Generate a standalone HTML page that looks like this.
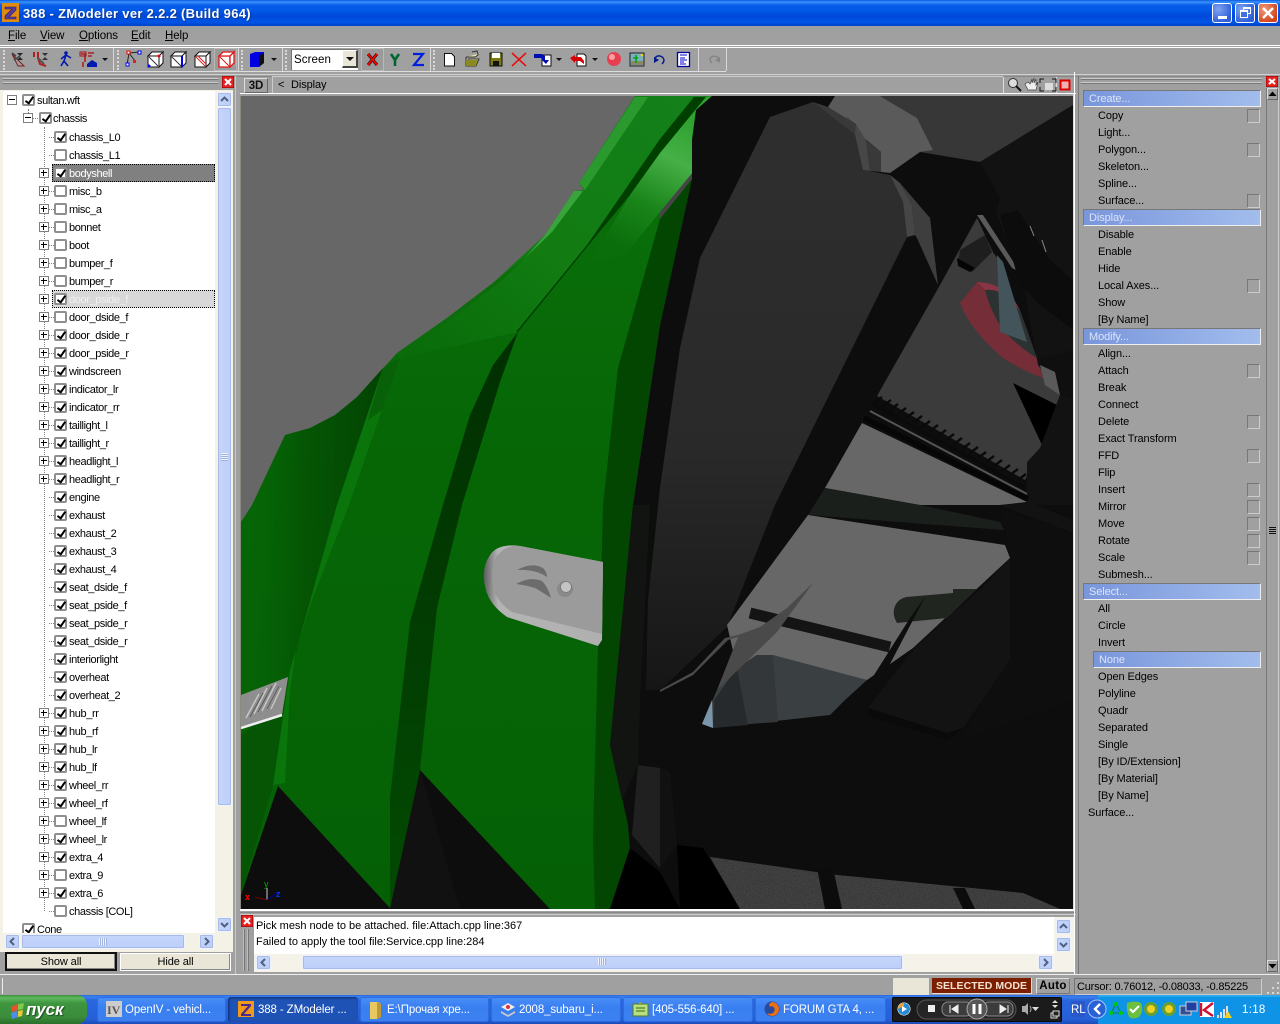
<!DOCTYPE html>
<html><head><meta charset="utf-8"><title>388 - ZModeler</title>
<style>
html,body{margin:0;padding:0;width:1280px;height:1024px;overflow:hidden;background:#a0a0a0}
body{position:relative;font:11px/18px "Liberation Sans",sans-serif;color:#000}
div,span,b,i{position:absolute;display:block;box-sizing:border-box;font-style:normal;white-space:nowrap}
svg{position:absolute;display:block}
#title{left:0;top:0;width:1280px;height:26px;background:linear-gradient(#0a58dc 0,#3a93ff 2px,#0a5fe8 5px,#0058e6 11px,#0047d8 16px,#0055e6 22px,#0044c8 26px)}
#title span{left:23px;top:5px;font:bold 13px/18px "Liberation Sans",sans-serif;color:#fff;letter-spacing:.31px;text-shadow:1px 1px 0 #0b3a9c}
.tb{top:3px;width:20px;height:20px;border:1px solid #fff;border-radius:3px;background:radial-gradient(circle at 30% 30%,#7fa4f0,#2f5fd8 75%)}
.m{top:27px;letter-spacing:-.1px;font-size:11.5px}
.m u{text-decoration:underline}
.hl{background:#fff;height:1px}
.grip{width:3px;border-left:2px dotted #d8d8d8}
.div{width:1px;background:#d8d8d8}
#tree{left:3px;top:91px;width:212px;height:842px;background:#fff;overflow:hidden}
.r{position:relative;height:18px;padding-left:66px;letter-spacing:-.38px;font-size:11px;line-height:21px}
.c{left:51px;top:3px;width:13px;height:12px;border:2px solid #8f8f8f;border-radius:2px;background:#fff}
.k:after{content:"";position:absolute;left:3px;top:-1px;width:3px;height:7px;border:solid #000;border-width:0 2px 2px 0;transform:rotate(35deg)}
.e{left:36px;top:4px;width:10px;height:10px;border:1px solid #7f7f7f;background:#fff}
.e:before{content:"";position:absolute;left:1px;top:3px;width:6px;height:1px;background:#000}
.p:after{content:"";position:absolute;left:3px;top:1px;width:1px;height:6px;background:#000}
.h{left:46px;top:9px;width:5px;border-top:1px dotted #808080}
.sel{left:49px;top:0;width:163px;height:18px;border:1px dotted #000}
.sb{background:linear-gradient(90deg,#c6d6fb,#bccffa);border:1px solid #eef3ff;border-radius:2px;box-shadow:0 0 0 1px #a8bbe6 inset}
.sh{background:linear-gradient(#c6d6fb,#bccffa);border:1px solid #eef3ff;border-radius:2px;box-shadow:0 0 0 1px #a8bbe6 inset}
.btn{background:#e9e6d7;border:1px solid #fff;text-align:center;letter-spacing:-.1px}
.hd{left:1083px;width:178px;height:17px;background:linear-gradient(90deg,#7a96dc,#a2bdec);border:1px solid;border-color:#777 #eee #eee #777;color:#dbe5fa;padding-left:5px;line-height:17px;letter-spacing:-.1px}
.it{left:1098px;letter-spacing:-.1px;line-height:21px;height:17px}
.bx{left:1247px;width:13px;height:14px;border:1px solid;border-color:#777 #ccc #ccc #777}
#task{left:0;top:995px;width:1280px;height:29px;background:linear-gradient(#2a67dd 0,#3b83ee 2px,#2a66df 5px,#2560d8 24px,#1c4bb8 29px)}
.t{top:2px;height:25px;background:linear-gradient(#4a90f8,#3a7ff0 40%,#3c80ef);border-radius:3px;color:#fff;padding-left:28px;line-height:26px;font-size:11.5px;letter-spacing:-.12px;box-shadow:inset 0 0 0 1px #2d6ce0}
.t.a{background:#1f52b5;box-shadow:inset 1px 1px 2px #0f306f}
</style></head><body>

<!-- title bar -->
<div id="title">
<span>388 - ZModeler ver 2.2.2 (Build 964)</span>
<svg style="left:2px;top:3px" width="17" height="19" viewBox="0 0 17 19"><rect width="17" height="19" fill="#e08a10"/><path d="M3 4H14V7L7 14H14V16H3V13L10 6H3Z" fill="#5a3aa0" stroke="#2a2050" stroke-width=".6"/></svg>
<div class="tb" style="left:1212px"><i style="left:5px;top:12px;width:9px;height:3px;background:#fff"></i></div>
<div class="tb" style="left:1235px"><i style="left:7px;top:3px;width:8px;height:7px;border:1px solid #fff;border-top-width:2px"></i><i style="left:4px;top:6px;width:8px;height:8px;border:1px solid #fff;border-top-width:2px;background:#3f6ede"></i></div>
<div class="tb" style="left:1258px;background:radial-gradient(circle at 30% 30%,#ef9a7a,#d4441c 75%)"><svg width="18" height="18"><path d="M4 4L14 14M14 4L4 14" stroke="#fff" stroke-width="2.4"/></svg></div>
</div>

<!-- menu -->
<span class="m" style="left:8px"><u>F</u>ile</span>
<span class="m" style="left:40px"><u>V</u>iew</span>
<span class="m" style="left:79px"><u>O</u>ptions</span>
<span class="m" style="left:131px"><u>E</u>dit</span>
<span class="m" style="left:165px"><u>H</u>elp</span>
<div class="hl" style="left:0;top:45px;width:1280px"></div>
<div class="hl" style="left:0;top:47px;width:1280px"></div>

<!-- toolbar -->
<div class="hl" style="left:0;top:71px;width:726px;background:#ddd"></div>
<div style="left:0;top:74px;width:1280px;height:1px;background:#d0d0d0"></div>
<div style="left:0;top:76px;width:1280px;height:1px;background:#888"></div>
<div class="grip" style="left:3px;top:50px;height:20px"></div>
<div class="div" style="left:113px;top:48px;height:23px"></div>
<div class="grip" style="left:117px;top:50px;height:20px"></div>
<div class="div" style="left:238px;top:48px;height:23px"></div>
<div class="grip" style="left:241px;top:50px;height:20px"></div>
<div class="div" style="left:282px;top:48px;height:23px"></div>
<div class="grip" style="left:285px;top:50px;height:20px"></div>
<div class="div" style="left:430px;top:48px;height:23px"></div>
<div class="grip" style="left:433px;top:50px;height:20px"></div>
<div class="div" style="left:698px;top:48px;height:23px"></div>
<div class="div" style="left:726px;top:48px;height:23px"></div>
<div style="left:214px;top:48px;width:23px;height:23px;background:#9a9a9a;border:1px solid #b8b8b8"></div>
<div style="left:361px;top:48px;width:23px;height:23px;background:#9a9a9a;border:1px solid #b8b8b8"></div>
<div style="left:291px;top:49px;width:67px;height:21px;background:#fff;border:1px solid #777;border-width:1px 0 0 1px;padding-left:2px;line-height:21px;font-size:11.5px;letter-spacing:.1px">Screen</div>
<div style="left:342px;top:50px;width:16px;height:18px;background:#e9e6d7;border:1px solid #555;border-width:1px 2px 2px 1px;border-color:#fff #444 #444 #fff"></div>

<svg style="left:0;top:48px" width="730" height="24" viewBox="0 48 730 24" fill="none">
<path d="M12 54L18 66L24 66Z" stroke="#7a2020"/><path d="M12 53l4 3M14 60l6-4" stroke="#444" stroke-width="1.5"/><path d="M17 53h6l-3 3zM17 60h6l-3-3z" fill="#223"/>
<path d="M34 52v5M38 52v6l2 6 6 2" stroke="#b02020" stroke-width="2"/><path d="M38 58l6 6" stroke="#555" stroke-width="2"/><path d="M42 53h6l-3 3zM42 60h6l-3-3z" fill="#333"/>
<circle cx="66" cy="53" r="1.8" fill="#0018b0"/><path d="M66 55l-2 6-3 5M64 61l4 5M66 55l-5 4M66 55l5 3" stroke="#0018b0" stroke-width="1.6"/>
<path d="M81 54h4v8M83 62v5M88 53h6M88 56h4" stroke="#b02020" stroke-width="1.6"/><path d="M87 64l5-4 5 3v4H87Z" fill="#001ab0"/><path d="M80 52h6v4h-6z" stroke="#a01818"/>
<path d="M102 58h6l-3 3z" fill="#111"/>
<path d="M127 65L129 53L140 52M129 53L135 61" stroke="#222" stroke-width="1"/><rect x="126" y="63" width="3" height="3" fill="#fff" stroke="#00f"/><rect x="127" y="51" width="3" height="3" fill="#fff" stroke="#e00"/><rect x="138" y="51" width="3" height="3" fill="#fff" stroke="#00f"/><rect x="133" y="60" width="3" height="3" fill="#e02020"/>
<g fill="#fff" stroke="#111"><path d="M148 56h11v11h-11z"/><path d="M148 56l4-4h11l-4 4zM159 56l4-4v11l-4 4z"/></g><path d="M149 57l9 9" stroke="#333"/><circle cx="159" cy="56" r="1.5" fill="#e00"/><circle cx="149" cy="66" r="1.5" fill="#00e"/>
<g fill="#fff" stroke="#111"><path d="M171 56h11v11h-11z"/><path d="M171 56l4-4h11l-4 4zM182 56l4-4v11l-4 4z"/></g><path d="M182 56v11" stroke="#00e" stroke-width="2"/><path d="M172 57l9 9" stroke="#333"/>
<g fill="#fff" stroke="#111"><path d="M195 56h11v11h-11z"/><path d="M195 56l4-4h11l-4 4zM206 56l4-4v11l-4 4z"/></g><path d="M196 57l9 9M198 56l8 8" stroke="#e02020"/>
<g fill="#fff" stroke="#e01818" stroke-width="1.3"><path d="M219 56h11v11h-11z"/><path d="M219 56l4-4h11l-4 4zM230 56l4-4v11l-4 4z"/></g><path d="M220 57l9 9" stroke="#e01818"/>
<path d="M250 54l5-2h9v11l-5 4h-9z" fill="#0000e0"/><path d="M259 56l5-3v10l-5 4z" fill="#111"/><path d="M271 58h6l-3 3z" fill="#111"/>
<path d="M346 57h8l-4 4z" fill="#111"/>
<path d="M368 54l9 11M377 54l-9 11" stroke="#111" stroke-width="3"/><path d="M368 54l9 11M377 54l-9 11" stroke="#f00" stroke-width="1.8"/>
<path d="M391 54l4 6 4-6M395 60v6" stroke="#063" stroke-width="2.6"/>
<path d="M413 54h10l-9 11h10" stroke="#0020e0" stroke-width="2.2"/>
<path d="M444.500 53.500h7l3 3v9.500h-10z" fill="#fff" stroke="#111"/>
<path d="M466 57h9l3-2v-1M466 57v9h10l3-7h-10l-3 7" fill="#f0e8a0" stroke="#333"/><path d="M466 60v6h10l2-6z" fill="#8a8a20"/><path d="M472 52l5-1 1 3" stroke="#333"/>
<rect x="490" y="53" width="12" height="13" fill="#7a7a10" stroke="#111"/><rect x="492" y="53" width="8" height="5" fill="#fff"/><rect x="493" y="61" width="6" height="5" fill="#111"/>
<path d="M512 53l14 13M526 53l-14 13" stroke="#e81010" stroke-width="1.6"/>
<path d="M542 55h9v11h-9z" fill="#fff" stroke="#111"/><path d="M534 54h8l3 2v4h4l-3 4-4-4v-2h-8z" fill="#0010b0"/><path d="M556 58h6l-3 3z" fill="#111"/>
<path d="M577 54h7l2 2v10h-9z" fill="#fff" stroke="#111"/><path d="M570 58l5-3v2h6l3 4v3l-4-3h-5v2z" fill="#d80000"/><path d="M592 58h6l-3 3z" fill="#111"/>
<circle cx="614" cy="59" r="7" fill="#e64050"/><circle cx="612" cy="57" r="3" fill="#f8a0a0"/>
<rect x="630" y="53" width="14" height="13" fill="#7ab0c0" stroke="#222"/><rect x="631" y="61" width="12" height="4" fill="#886"/><path d="M636 55v8M633 58h5" stroke="#0a0" stroke-width="1.600"/><circle cx="642" cy="55" r="1.300" fill="#fc0"/>
<path d="M655 58a5 5 0 0 1 9 2c0 2-1 3-2 4" stroke="#001a90" stroke-width="1.400"/><path d="M654 63v-6l5 3z" fill="#001a90"/>
<rect x="677.500" y="52.500" width="12" height="14" fill="#fff" stroke="#0000a0" stroke-width="1.300"/><path d="M680 55h7M680 58h5M680 60h7M680 62h4M680 64h6" stroke="#0000d0"/>
<path d="M719 59a5 5 0 0 0-9 0c0 2 1 3 2 4" stroke="#858585" stroke-width="1.400"/><path d="M720 63v-6l-5 3z" fill="#858585"/>
</svg>

<!-- left panel -->
<div style="left:3px;top:78px;width:215px;height:2px;border-top:1px solid #ccc;border-bottom:1px solid #777"></div>
<div style="left:3px;top:82px;width:215px;height:2px;border-top:1px solid #ccc;border-bottom:1px solid #777"></div>
<svg style="left:222px;top:76px" width="12" height="12"><rect width="12" height="12" fill="#e82020" stroke="#800"/><path d="M3 3l6 6M9 3l-6 6" stroke="#fff" stroke-width="2"/></svg>
<div style="left:0;top:90px;width:233px;height:862px;background:#f4f2e6"></div>

<div id="tree">
<div style="left:25px;top:18px;height:6px;border-left:1px dotted #808080"></div>
<div style="left:41px;top:36px;height:784px;border-left:1px dotted #808080"></div>
<div class="r" style="padding-left:34px"><b class="e" style="left:4px"></b><b class="c k" style="left:19px"></b>sultan.wft</div>
<div class="r" style="padding-left:50px"><b class="e" style="left:20px"></b><b class="h" style="left:30px"></b><b class="c k" style="left:36px"></b>chassis</div>
<div class="r" style="top:1px"><b class="h"></b><b class="c k"></b>chassis_L0</div>
<div class="r" style="top:1px"><b class="h"></b><b class="c"></b>chassis_L1</div>
<div class="r" style="top:1px"><b class="sel" style="background:#808080"></b><b class="e p"></b><b class="c k"></b><span style="left:66px;color:#fff">bodyshell</span></div>
<div class="r" style="top:1px"><b class="e p"></b><b class="h"></b><b class="c"></b>misc_b</div>
<div class="r" style="top:1px"><b class="e p"></b><b class="h"></b><b class="c"></b>misc_a</div>
<div class="r" style="top:1px"><b class="e p"></b><b class="h"></b><b class="c"></b>bonnet</div>
<div class="r" style="top:1px"><b class="e p"></b><b class="h"></b><b class="c"></b>boot</div>
<div class="r" style="top:1px"><b class="e p"></b><b class="h"></b><b class="c"></b>bumper_f</div>
<div class="r" style="top:1px"><b class="e p"></b><b class="h"></b><b class="c"></b>bumper_r</div>
<div class="r" style="top:1px"><b class="sel" style="background:#d8d8d8"></b><b class="e p"></b><b class="c k"></b><span style="left:66px;color:#f0f0f0">door_pside_f</span></div>
<div class="r" style="top:1px"><b class="e p"></b><b class="h"></b><b class="c"></b>door_dside_f</div>
<div class="r" style="top:1px"><b class="e p"></b><b class="h"></b><b class="c k"></b>door_dside_r</div>
<div class="r" style="top:1px"><b class="e p"></b><b class="h"></b><b class="c k"></b>door_pside_r</div>
<div class="r" style="top:1px"><b class="e p"></b><b class="h"></b><b class="c k"></b>windscreen</div>
<div class="r" style="top:1px"><b class="e p"></b><b class="h"></b><b class="c k"></b>indicator_lr</div>
<div class="r" style="top:1px"><b class="e p"></b><b class="h"></b><b class="c k"></b>indicator_rr</div>
<div class="r" style="top:1px"><b class="e p"></b><b class="h"></b><b class="c k"></b>taillight_l</div>
<div class="r" style="top:1px"><b class="e p"></b><b class="h"></b><b class="c k"></b>taillight_r</div>
<div class="r" style="top:1px"><b class="e p"></b><b class="h"></b><b class="c k"></b>headlight_l</div>
<div class="r" style="top:1px"><b class="e p"></b><b class="h"></b><b class="c k"></b>headlight_r</div>
<div class="r" style="top:1px"><b class="h"></b><b class="c k"></b>engine</div>
<div class="r" style="top:1px"><b class="h"></b><b class="c k"></b>exhaust</div>
<div class="r" style="top:1px"><b class="h"></b><b class="c k"></b>exhaust_2</div>
<div class="r" style="top:1px"><b class="h"></b><b class="c k"></b>exhaust_3</div>
<div class="r" style="top:1px"><b class="h"></b><b class="c k"></b>exhaust_4</div>
<div class="r" style="top:1px"><b class="h"></b><b class="c k"></b>seat_dside_f</div>
<div class="r" style="top:1px"><b class="h"></b><b class="c k"></b>seat_pside_f</div>
<div class="r" style="top:1px"><b class="h"></b><b class="c k"></b>seat_pside_r</div>
<div class="r" style="top:1px"><b class="h"></b><b class="c k"></b>seat_dside_r</div>
<div class="r" style="top:1px"><b class="h"></b><b class="c k"></b>interiorlight</div>
<div class="r" style="top:1px"><b class="h"></b><b class="c k"></b>overheat</div>
<div class="r" style="top:1px"><b class="h"></b><b class="c k"></b>overheat_2</div>
<div class="r" style="top:1px"><b class="e p"></b><b class="h"></b><b class="c k"></b>hub_rr</div>
<div class="r" style="top:1px"><b class="e p"></b><b class="h"></b><b class="c k"></b>hub_rf</div>
<div class="r" style="top:1px"><b class="e p"></b><b class="h"></b><b class="c k"></b>hub_lr</div>
<div class="r" style="top:1px"><b class="e p"></b><b class="h"></b><b class="c k"></b>hub_lf</div>
<div class="r" style="top:1px"><b class="e p"></b><b class="h"></b><b class="c k"></b>wheel_rr</div>
<div class="r" style="top:1px"><b class="e p"></b><b class="h"></b><b class="c k"></b>wheel_rf</div>
<div class="r" style="top:1px"><b class="e p"></b><b class="h"></b><b class="c"></b>wheel_lf</div>
<div class="r" style="top:1px"><b class="e p"></b><b class="h"></b><b class="c k"></b>wheel_lr</div>
<div class="r" style="top:1px"><b class="e p"></b><b class="h"></b><b class="c k"></b>extra_4</div>
<div class="r" style="top:1px"><b class="e p"></b><b class="h"></b><b class="c"></b>extra_9</div>
<div class="r" style="top:1px"><b class="e p"></b><b class="h"></b><b class="c k"></b>extra_6</div>
<div class="r" style="top:1px"><b class="h"></b><b class="c"></b>chassis [COL]</div>
<div class="r" style="top:1px;padding-left:34px"><b class="c k" style="left:19px"></b>Cone</div>
</div>

<!-- tree scrollbars -->
<div class="sb" style="left:217px;top:92px;width:15px;height:15px"></div>
<svg style="left:217px;top:92px" width="15" height="15"><path d="M4 9l3.500-3.500L11 9" fill="none" stroke="#4d6185" stroke-width="2"/></svg>
<div class="sb" style="left:217px;top:107px;width:15px;height:699px"></div>
<div style="left:221px;top:453px;width:7px;height:8px;background:repeating-linear-gradient(#eef3ff 0 1px,#9fb3dd 1px 2px)"></div>
<div class="sb" style="left:217px;top:917px;width:15px;height:15px"></div>
<svg style="left:217px;top:917px" width="15" height="15"><path d="M4 6l3.500 3.500L11 6" fill="none" stroke="#4d6185" stroke-width="2"/></svg>
<div class="sh" style="left:5px;top:934px;width:15px;height:15px"></div>
<svg style="left:5px;top:934px" width="15" height="15"><path d="M9 4L5.500 7.500L9 11" fill="none" stroke="#4d6185" stroke-width="2"/></svg>
<div class="sh" style="left:21px;top:934px;width:164px;height:15px"></div>
<div style="left:99px;top:938px;width:8px;height:7px;background:repeating-linear-gradient(90deg,#eef3ff 0 1px,#9fb3dd 1px 2px)"></div>
<div class="sh" style="left:199px;top:934px;width:15px;height:15px"></div>
<svg style="left:199px;top:934px" width="15" height="15"><path d="M6 4l3.500 3.500L6 11" fill="none" stroke="#4d6185" stroke-width="2"/></svg>
<div class="btn" style="left:5px;top:952px;width:112px;height:19px;border:2px solid #111;line-height:16px;box-shadow:inset -1px -1px 0 #888">Show all</div>
<div class="btn" style="left:120px;top:953px;width:111px;height:18px;line-height:16px;box-shadow:inset -1px -1px 0 #888">Hide all</div>
<div style="left:0;top:974px;width:1280px;height:1px;background:#eee"></div>
<div style="left:235px;top:76px;width:1px;height:898px;background:#c8c8c8"></div>

<!-- viewport header -->
<div class="btn" style="left:244px;top:78px;width:24px;height:15px;background:#a0a0a0;border-color:#ddd #666 #666 #ddd;font-weight:bold;line-height:14px;color:#111;font-size:11.500px">3D</div>
<div style="left:272px;top:76px;width:1px;height:17px;background:#ccc"></div>
<span style="left:278px;top:76px">&lt;</span><span style="left:291px;top:76px;letter-spacing:-.1px">Display</span>
<div style="left:272px;top:76px;width:731px;height:1px;background:#ccc"></div>
<div style="left:1003px;top:77px;width:1px;height:16px;background:#ddd"></div>
<div style="left:1056px;top:77px;width:1px;height:16px;background:#ddd"></div>
<svg style="left:1006px;top:76px" width="66" height="18">
<circle cx="7" cy="7" r="4.500" fill="#ddd" stroke="#333"/><path d="M10 10l5 5" stroke="#111" stroke-width="2"/>
<path d="M19 8l3 6h8l2-8-2 3V3l-2 4V2l-2 5V3l-2 5-2-2z" fill="#eee" stroke="#444" stroke-width=".7"/>
<path d="M34 7V3h4M46 3h4v4M34 11v4h4M50 11v4h-4" stroke="#111" fill="none"/><rect x="39" y="7" width="8" height="7" fill="#ddd"/>
<rect x="54.500" y="4.500" width="9" height="9" fill="#f0b0b0" stroke="#d00" stroke-width="2"/></svg>
<div style="left:240px;top:93px;width:836px;height:1px;background:#fff"></div>

<!-- 3D viewport -->
<svg style="left:241px;top:96px" width="832" height="813" viewBox="241 96 832 813">
<defs>
<linearGradient id="gm" x1="0" y1="0" x2="0" y2="1"><stop offset="0" stop-color="#0b720b"/><stop offset=".4" stop-color="#066706"/><stop offset="1" stop-color="#056005"/></linearGradient>
<linearGradient id="gb" x1="1" y1="0" x2="0" y2="1"><stop offset="0" stop-color="#13801a"/><stop offset=".55" stop-color="#127c12"/><stop offset="1" stop-color="#086b08"/></linearGradient>
<linearGradient id="gd" x1="0" y1="0" x2="1" y2="0"><stop offset="0" stop-color="#066406" stop-opacity="0"/><stop offset=".45" stop-color="#034a03" stop-opacity=".6"/><stop offset="1" stop-color="#023e02" stop-opacity=".9"/></linearGradient>
<linearGradient id="gw" gradientUnits="userSpaceOnUse" x1="690" y1="120" x2="625" y2="250"><stop offset="0" stop-color="#2fa22f"/><stop offset=".3" stop-color="#46b046"/><stop offset=".65" stop-color="#1a851a"/><stop offset="1" stop-color="#0a6e0a"/></linearGradient>
<linearGradient id="gs" x1="0" y1="0" x2="0" y2="1"><stop offset="0" stop-color="#2f2f2f"/><stop offset=".6" stop-color="#292929"/><stop offset="1" stop-color="#161616"/></linearGradient>
<linearGradient id="gu" x1="0" y1="0" x2="0" y2="1"><stop offset="0" stop-color="#012f01"/><stop offset="1" stop-color="#024a02"/></linearGradient>
<linearGradient id="gp" x1="0" y1="0" x2="1" y2="0"><stop offset="0" stop-color="#5c5c5c"/><stop offset=".12" stop-color="#b4b4b4"/><stop offset="1" stop-color="#b0b0b0"/></linearGradient>
<filter id="n" x="0" y="0" width="100%" height="100%"><feTurbulence type="fractalNoise" baseFrequency=".7" numOctaves="2" seed="4"/><feColorMatrix values="0 0 0 0 .04 0 0 0 0 .04 0 0 0 0 .04 3.200 0 0 0 -1.100"/><feComposite in2="SourceGraphic" operator="in"/></filter>
</defs>
<rect x="241" y="96" width="832" height="813" fill="#676767"/>
<polygon points="241,850 278,770 420,750 640,830 640,909 241,909" fill="#0d0d0d"/>
<polygon points="420,770 390,908 460,909 420,770" fill="#111"/>
<!-- green main -->
<polygon points="635,96 712,96 695,110 693,178 660,325 633,505 610,745 628,825 630,848 610,909 550,909 420,770 390,908 278,786 241,895 241,522 252,505 285,435 310,428 335,415 357,397 397,353 447,318 493,283 545,235 574,191 584,190 579,183" fill="url(#gm)"/>
<polygon points="241,522 252,505 285,435 310,428 335,415 357,397 383,368 337,505 307,612 290,678 273,785 241,895" fill="url(#gd)"/>
<polygon points="241,895 273,785 288,700 241,735" fill="#055505"/>
<polygon points="383,368 400,358 349,505 312,600 296,650 290,690 285,783 273,785 290,670 307,612 337,505" fill="#0a750a"/>
<polygon points="383,368 400,358 382,410 368,420" fill="#086008"/>
<polygon points="635,96 712,96 660,145 587,247 518,332 400,358 397,353 447,318 493,283 545,235 574,191 584,190 579,183" fill="url(#gb)"/>
<polygon points="635,97 648,97 585,190 579,183" fill="#2a9a2e"/>
<polygon points="574,191 583,191 552,232 525,258 545,235" fill="#3aa43c"/>
<polygon points="525,258 552,232 500,282 447,322 400,358 397,353 447,318 493,283" fill="#0c6c0c"/>
<polygon points="694,97 706,97 660,153 630,195 587,247 518,332 516,332 587,245 660,139" fill="#013f01"/>
<polygon points="706,97 712,96 696,110 692,140 692,175 660,212 625,255 590,262 630,195 660,153" fill="url(#gw)"/>
<polygon points="693,172 692,179 660,219 660,212" fill="#454545"/>
<polygon points="518,332 493,365 470,415 443,505 410,622 390,798 390,908 420,770 437,608 462,505 500,382" fill="url(#gu)"/>
<polygon points="692,179 660,219 618,368 603,505 602,548 598,645 593,838 595,909 610,909 630,848 628,825 610,745 633,505 660,325" fill="#024602"/>

<!-- bracket -->
<path d="M603,562 L520,546 Q498,543 490,555 Q480,570 486,590 Q490,605 507,617 L598,646 L602,640 Z" fill="url(#gp)"/>
<path d="M603,562 L520,546 Q505,545 496,557 Q490,570 493,588 Q498,603 512,612 L602,634 Z" fill="#9b9b9b"/>
<path d="M517 570q15-8 26-2q4 4 4 9q-12-8-30-7zM516 584q14-8 26-3q6 6 9 17q-12-8-16-10q-10-3-19-4z" fill="#6c6c6c"/>
<circle cx="565" cy="589" r="8" fill="#8a8a8a"/><circle cx="566" cy="587" r="5.500" fill="#c4c4c4" stroke="#777" stroke-width=".8"/>
<!-- tail light -->
<polygon points="241,695 288,677 282,715 241,729" fill="#8e8e8e"/>
<path d="M246 718l13-24M254 714l13-26M262 711l14-28M271 709l10-21" stroke="#c8c8c8" stroke-width="1.400"/><path d="M250 717l13-24M258 712l14-26M267 709l12-23" stroke="#555" stroke-width=".8"/>
<path d="M241 728l41-13" stroke="#eee" stroke-width="2.500"/>

<!-- dark base -->
<polygon points="712,96 1073,96 1073,909 610,909 630,848 628,825 610,745 633,505 660,325 692,179 692,140 696,110" fill="#0d0d0d"/>
<polygon points="633,505 650,505 640,700 638,765 622,800 610,745" fill="#121412"/>
<polygon points="638,765 660,768 660,868 632,835" fill="#202020"/>
<polygon points="660,768 670,772 677,845 660,868" fill="#111"/>
<polygon points="630,848 660,872 680,909 610,909" fill="#000"/>
<polygon points="677,845 703,848 740,909 680,909" fill="#000"/>
<!-- cylinder & top right -->
<polygon points="880,96 1073,96 1073,105 980,162 920,152 933,150 917,118" fill="#373737"/>
<polygon points="835,96 880,96 917,118 933,150 920,152 890,173 881,172 881,152 846,123 828,107" fill="#5a5a5a"/>
<!-- seat -->
<polygon points="813,102 770,117 700,258 680,348 660,488 648,600 646,690 660,690 727,627 775,505 907,237 903,202 890,175 863,170 855,135" fill="url(#gs)"/>
<polygon points="846,116 855,135 863,170 870,171 866,140 856,124" fill="#474747"/>
<polygon points="866,140 881,152 881,172 870,171" fill="#393939"/>
<polygon points="813,102 828,107 856,124 855,135" fill="#393939"/>
<polygon points="890,175 900,183 912,205 915,235 907,237 903,202" fill="#464646"/>
<polygon points="900,183 930,218 938,285 917,238 915,235 912,205" fill="#3e3e3e"/>
<!-- centre gray -->
<polygon points="940,285 977,218 993,252 1000,262 1038,362 1060,395 1042,445 1025,480 877,396" fill="#3b3b3b"/>
<polygon points="1013,383 1057,405 1042,445" fill="#000"/>
<polygon points="977,215 983,215 1020,272 1012,268" fill="#5a5a5a"/>
<polygon points="960,250 985,235 992,252 972,272 958,262" fill="#1e1e1e"/>
<polygon points="957,258 975,268 970,272 958,266" fill="#050505"/>
<!-- red ring -->
<path d="M960,303 Q970,330 1003,358 Q1025,372 1043,378 L1037,358 Q1020,348 1003,330 Q990,310 985,290 L977,282 Z" fill="#752d37"/>
<path d="M977,282 Q1000,283 1013,298 L1020,310 L1008,304 Q995,290 985,290Z" fill="#8a3545"/>
<path d="M985,290 Q1000,288 1012,302 L1020,310 L1037,358 Q1020,348 1003,330 Q990,310 985,290Z" fill="#2c3232"/>
<polygon points="997,255 1003,262 1027,342 1000,332" fill="#43555a"/>
<!-- right dark -->
<polygon points="1073,105 980,162 1000,198 996,212 1023,282 1038,365 1060,395 1040,448 1027,462 1027,505 1073,505" fill="#121212"/>
<polygon points="1000,215 1018,210 1050,260 1073,280 1073,330 1040,305 1020,285" fill="#0c0c0c"/>
<path d="M1030 226l4 10M1042 240l4 12" stroke="#888" stroke-width="1"/>
<polygon points="1037,358 1055,355 1073,350 1073,400 1060,395" fill="#0f0f0f"/>
<polygon points="1040,365 1055,372 1060,395 1045,385" fill="#5a5a5a"/>
<!-- comb -->
<path d="M875 402l7-5M883 406l8-6M890 410l8-6M898 414l8-6M906 418l8-6M914 422l8-6M922 427l8-6M930 431l8-6M938 436l8-6M946 440l8-6M954 444l8-6M962 449l8-6M970 453l8-6M978 458l8-6M986 462l8-6M994 466l8-6M1002 471l8-6M1010 475l8-6M1018 480l8-6" stroke="#0a0a0a" stroke-width="2.400"/>
<path d="M873 404L1025 488" stroke="#0a0a0a" stroke-width="3"/>
<path d="M870 411L1027 494" stroke="#555" stroke-width="2"/>
<polygon points="862,423 1027,502 1000,505 920,505 825,488" fill="#676767"/>
<path d="M864 418L1028 499" stroke="#060606" stroke-width="5"/>
<polygon points="825,488 920,505 1000,522 1004,530 808,515" fill="#1a1f1c"/>
<polygon points="1000,508 1070,533 1073,560 1040,580 1010,558 1005,530" fill="#0e0e0e"/>
<polygon points="1000,505 1030,503 1073,520 1073,533" fill="#121212"/>
<!-- grey B -->
<polygon points="808,515 1005,545 1010,558 913,648 867,680 757,655 737,668 727,625" fill="#676767"/>
<path d="M750 613L890 647" stroke="#141414" stroke-width="11"/>
<!-- window -->
<polygon points="713,728 702,724 717,690 737,668 757,655 773,655 867,680 845,700 830,715" fill="#3a3f42"/>
<polygon points="737,668 757,655 773,655 778,722 748,724" fill="#343739"/>
<polygon points="712,700 702,724 713,728" fill="#7a95a8"/>
<polygon points="713,728 714,700 737,668 748,725" fill="#262a2c"/>
<!-- blade -->
<polygon points="660,690 693,672 725,638 738,635 760,627 787,608 813,583 777,632 740,668 717,690 738,637 728,640 693,675 660,692" fill="#4a4a4a"/>
<!-- right seat -->
<polygon points="1010,558 980,590 947,618 913,650 868,708 947,733 963,728 1010,660 1050,570" fill="#121312"/>
<polygon points="1010,558 1050,570 1073,540 1073,700 960,740 1010,660" fill="#0e0e0e"/>
<path d="M897 623q-6-10-1-19q3-5 10-7L953 593l0-4h24L947 618z" fill="#20261f"/>
<polygon points="925,597 867,708 857,702 910,618" fill="#0c0d0c"/>
<polygon points="868,708 947,733 963,728 947,740 868,716" fill="#0a0a0a"/>
<!-- carpet -->
<polygon points="710,857 837,875 1023,893 1060,909 740,909" fill="#434343"/>
<polygon points="710,857 837,875 1023,893 1060,909 740,909" fill="#fff" filter="url(#n)"/>
<polygon points="817,868 833,868 842,909 825,909" fill="#0c0c0c"/>
<polygon points="953,888 965,888 975,909 963,909" fill="#0c0c0c"/>
<!-- axes -->
<path d="M267 900V888" stroke="#ccc"/><path d="M267 900L255 897" stroke="#700"/><path d="M267 900L277 893" stroke="#00a"/>
<text x="245" y="900" font-family="Liberation Sans" font-weight="bold" font-size="9" fill="#f00">x</text>
<text x="264" y="887" font-family="Liberation Sans" font-size="9" fill="#0a0">y</text>
<text x="276" y="897" font-family="Liberation Sans" font-weight="bold" font-size="9" fill="#03f">z</text>
</svg>
<div style="left:240px;top:96px;width:1px;height:813px;background:#8a8a80"></div>
<div style="left:1073px;top:94px;width:1px;height:816px;background:#ddd"></div>
<div style="left:240px;top:909px;width:834px;height:2px;background:#fff"></div>

<!-- log -->
<div style="left:240px;top:912px;width:836px;height:1px;background:#888"></div>
<div style="left:240px;top:914px;width:836px;height:1px;background:#ccc"></div>
<svg style="left:241px;top:915px" width="12" height="12"><rect width="12" height="12" fill="#e82020" stroke="#800"/><path d="M3 3l6 6M9 3l-6 6" stroke="#fff" stroke-width="2"/></svg>
<div style="left:243px;top:929px;width:2px;height:42px;background:#bbb;border-right:1px solid #777"></div>
<div style="left:247px;top:929px;width:2px;height:42px;background:#bbb;border-right:1px solid #777"></div>
<div style="left:254px;top:917px;width:820px;height:55px;background:#f5f3e9"></div>
<div style="left:254px;top:917px;width:800px;height:37px;background:#fff"></div>
<span style="left:256px;top:917px;letter-spacing:-.03px">Pick mesh node to be attached. file:Attach.cpp line:367</span>
<span style="left:256px;top:933px;letter-spacing:-.03px">Failed to apply the tool file:Service.cpp line:284</span>
<div class="sb" style="left:1056px;top:919px;width:15px;height:15px"></div>
<svg style="left:1056px;top:919px" width="15" height="15"><path d="M4 9l3.500-3.500L11 9" fill="none" stroke="#4d6185" stroke-width="2"/></svg>
<div class="sb" style="left:1056px;top:937px;width:15px;height:15px"></div>
<svg style="left:1056px;top:937px" width="15" height="15"><path d="M4 6l3.500 3.500L11 6" fill="none" stroke="#4d6185" stroke-width="2"/></svg>
<div class="sh" style="left:256px;top:955px;width:15px;height:15px"></div>
<svg style="left:256px;top:955px" width="15" height="15"><path d="M9 4L5.500 7.500L9 11" fill="none" stroke="#4d6185" stroke-width="2"/></svg>
<div class="sh" style="left:302px;top:955px;width:601px;height:15px"></div>
<div style="left:598px;top:958px;width:8px;height:7px;background:repeating-linear-gradient(90deg,#eef3ff 0 1px,#9fb3dd 1px 2px)"></div>
<div class="sh" style="left:1038px;top:955px;width:15px;height:15px"></div>
<svg style="left:1038px;top:955px" width="15" height="15"><path d="M6 4l3.500 3.500L6 11" fill="none" stroke="#4d6185" stroke-width="2"/></svg>

<!-- right panel -->
<div style="left:1074px;top:72px;width:1px;height:902px;background:#fff"></div>
<div style="left:1078px;top:76px;width:1px;height:898px;background:#777"></div>
<div style="left:1081px;top:78px;width:181px;height:2px;border-top:1px solid #ccc;border-bottom:1px solid #777"></div>
<div style="left:1081px;top:82px;width:181px;height:2px;border-top:1px solid #ccc;border-bottom:1px solid #777"></div>
<svg style="left:1266px;top:76px" width="12" height="11"><rect width="12" height="11" fill="#e82020" stroke="#800"/><path d="M3 3l6 5M9 3l-6 5" stroke="#fff" stroke-width="2"/></svg>
<div style="left:1266px;top:88px;width:1px;height:884px;background:#777"></div>
<div style="left:1278px;top:88px;width:1px;height:884px;background:#ccc"></div>
<div style="left:1267px;top:88px;width:11px;height:12px;border:1px solid;border-color:#ddd #666 #666 #ddd"></div>
<svg style="left:1267px;top:88px" width="11" height="12"><path d="M1.500 8L5.500 3.500L9.500 8Z" fill="#000"/></svg>
<div style="left:1267px;top:960px;width:11px;height:12px;border:1px solid;border-color:#ddd #666 #666 #ddd"></div>
<svg style="left:1267px;top:960px" width="11" height="12"><path d="M1.500 4L5.500 8.500L9.500 4Z" fill="#000"/></svg>
<div style="left:1269px;top:527px;width:7px;height:7px;background:repeating-linear-gradient(#111 0 1px,transparent 1px 2px)"></div>

<div class="hd" style="top:90px">Create...</div>
<span class="it" style="top:106px">Copy</span><span class="it" style="top:123px">Light...</span><span class="it" style="top:140px">Polygon...</span><span class="it" style="top:157px">Skeleton...</span><span class="it" style="top:174px">Spline...</span><span class="it" style="top:191px">Surface...</span>
<div class="hd" style="top:209px">Display...</div>
<span class="it" style="top:225px">Disable</span><span class="it" style="top:242px">Enable</span><span class="it" style="top:259px">Hide</span><span class="it" style="top:276px">Local Axes...</span><span class="it" style="top:293px">Show</span><span class="it" style="top:310px">[By Name]</span>
<div class="hd" style="top:328px">Modify...</div>
<span class="it" style="top:344px">Align...</span><span class="it" style="top:361px">Attach</span><span class="it" style="top:378px">Break</span><span class="it" style="top:395px">Connect</span><span class="it" style="top:412px">Delete</span><span class="it" style="top:429px">Exact Transform</span><span class="it" style="top:446px">FFD</span><span class="it" style="top:463px">Flip</span><span class="it" style="top:480px">Insert</span><span class="it" style="top:497px">Mirror</span><span class="it" style="top:514px">Move</span><span class="it" style="top:531px">Rotate</span><span class="it" style="top:548px">Scale</span><span class="it" style="top:565px">Submesh...</span>
<div class="hd" style="top:583px">Select...</div>
<span class="it" style="top:599px">All</span><span class="it" style="top:616px">Circle</span><span class="it" style="top:633px">Invert</span>
<div class="hd" style="top:651px;left:1093px;width:168px">None</div>
<span class="it" style="top:667px">Open Edges</span><span class="it" style="top:684px">Polyline</span><span class="it" style="top:701px">Quadr</span><span class="it" style="top:718px">Separated</span><span class="it" style="top:735px">Single</span><span class="it" style="top:752px">[By ID/Extension]</span><span class="it" style="top:769px">[By Material]</span><span class="it" style="top:786px">[By Name]</span>
<span class="it" style="top:803px;left:1088px">Surface...</span>
<div class="bx" style="top:109px"></div><div class="bx" style="top:143px"></div><div class="bx" style="top:194px"></div><div class="bx" style="top:279px"></div><div class="bx" style="top:364px"></div><div class="bx" style="top:415px"></div><div class="bx" style="top:449px"></div><div class="bx" style="top:483px"></div><div class="bx" style="top:500px"></div><div class="bx" style="top:517px"></div><div class="bx" style="top:534px"></div><div class="bx" style="top:551px"></div>

<!-- status bar -->
<div style="left:2px;top:978px;width:1px;height:16px;background:#eee"></div>
<div style="left:893px;top:978px;width:36px;height:17px;background:#e9e6d7"></div>
<div style="left:932px;top:978px;width:100px;height:16px;background:#7c1f00;border:1px solid #ddd;border-width:0 1px 1px 0;color:#f4e0d0;font-weight:bold;font-size:10.500px;line-height:16px;text-align:center;letter-spacing:.05px">SELECTED MODE</div>
<div style="left:1036px;top:978px;width:34px;height:16px;border:1px solid;border-color:#ddd #777 #777 #ddd;font-weight:bold;font-size:11.500px;line-height:14px;text-align:center;letter-spacing:.3px">Auto</div>
<div style="left:1074px;top:978px;width:188px;height:17px;border:1px solid;border-color:#777 #ccc #ccc #777;line-height:16px;padding-left:2px;font-size:11px;letter-spacing:-.2px">Cursor: 0.76012, -0.08033, -0.85225</div>
<svg style="left:1264px;top:980px" width="16" height="15"><path d="M13 2h2v2h-2zM13 7h2v2h-2zM8 7h2v2h-2zM13 12h2v2h-2zM8 12h2v2h-2zM3 12h2v2h-2z" fill="#d8d8d8"/></svg>

<!-- taskbar -->
<div id="task">
<div class="t" style="left:97px;width:129px">OpenIV - vehicl...</div>
<div class="t a" style="left:228px;width:130px;padding-left:30px">388 - ZModeler ...</div>
<div class="t" style="left:360px;width:129px;padding-left:27px">E:\Прочая хре...</div>
<div class="t" style="left:491px;width:130px">2008_subaru_i...</div>
<div class="t" style="left:623px;width:130px;padding-left:29px">[405-556-640] ...</div>
<div class="t" style="left:755px;width:131px">FORUM GTA 4, ...</div>
</div>
<!-- start -->
<div style="left:0;top:995px;width:87px;height:29px;background:linear-gradient(#3d8f3d 0,#5fb85f 3px,#3f963f 8px,#3a8c3a 22px,#2b6f2b 29px);border-radius:0 10px 10px 0"></div>
<span style="left:26px;top:1000px;color:#fff;font:italic bold 17px/20px 'Liberation Sans',sans-serif;text-shadow:1px 1px 1px #1c4a1c;letter-spacing:-.1px">пуск</span>
<svg style="left:0;top:995px" width="1280" height="29" viewBox="0 995 1280 29">
<path d="M11 1007l6-3 1 6-6 2z" fill="#e85030"/><path d="M18 1004l6-1 -1 6-5 1z" fill="#7ec84a"/><path d="M11 1013l6-2 1 6-6 2z" fill="#4a90e8"/><path d="M18 1011l5-1-1 6-4 1z" fill="#f0c830"/>
<rect x="106" y="1001" width="16" height="16" fill="#ccc"/><text x="107" y="1014" font-family="Liberation Serif" font-weight="bold" font-size="12" fill="#555">IV</text>
<rect x="238" y="1001" width="16" height="16" fill="#f09a18"/><path d="M241 1004h10v2l-7 8h7v2h-10v-2l7-8h-7z" fill="#4a2a90"/>
<path d="M370 1002h8l3 2v13l-4 2h-7z" fill="#e8c860"/><path d="M377 1002l4 2v13l-4 2z" fill="#c09a30"/>
<path d="M501 1007l7-4 7 4-7 4z" fill="#eee"/><path d="M501 1011l7 4 7-4v2l-7 4-7-4z" fill="#ccc"/><circle cx="508" cy="1007" r="2" fill="#d33"/>
<rect x="633" y="1004" width="15" height="12" fill="#b8e080" stroke="#5a7a20"/><path d="M636 1008h9M636 1011h9" stroke="#3a6a10"/><rect x="639" y="1002" width="3" height="3" fill="#88a040"/>
<circle cx="772" cy="1009" r="7.500" fill="#2a4aa0"/><path d="M772 1002a7 7 0 0 1 7 7a7 7 0 0 1-7 7a6 6 0 0 1-5-3q4 2 7-1q2-4-2-6l-2 1-1-3z" fill="#e87018"/>
<rect x="892.500" y="997.500" width="169" height="24" rx="1" fill="#1b1b1b" stroke="#0a0a0a"/>
<circle cx="904" cy="1009" r="6.500" fill="#fff"/><circle cx="904" cy="1009" r="6" fill="#2a8ad0"/><path d="M898 1009a6 6 0 0 1 6-6v3z" fill="#e8a030"/><path d="M902 1006l5 3-5 3z" fill="#fff"/>
<rect x="917" y="1000" width="99" height="19" rx="9.500" fill="#252525" stroke="#555"/>
<rect x="928" y="1005" width="7" height="7" fill="#eee"/>
<rect x="942" y="1002" width="30" height="14" rx="6" fill="#3c3c3c" stroke="#888"/>
<rect x="983" y="1002" width="30" height="14" rx="6" fill="#3c3c3c" stroke="#888"/>
<path d="M950 1005v8M958 1005l-6 4 6 4zM1000 1005l6 4-6 4zM1008 1005v8" fill="#eee" stroke="#eee"/>
<circle cx="977" cy="1009" r="10" fill="#555" stroke="#aaa"/><path d="M974 1004v10M980 1004v10" stroke="#fff" stroke-width="3"/>
<path d="M1022 1006h3l3-3v12l-3-3h-3z" fill="#aaa"/><path d="M1030 1006q2 3 0 6" stroke="#aaa" fill="none"/><path d="M1032 1007h7l-3.500 4z" fill="#ddd"/>
<path d="M1052 1003l3-3 3 3zM1052 1005l3 3 3-3z" fill="#ddd"/><rect x="1051" y="1013" width="6" height="5" fill="none" stroke="#ddd"/><rect x="1053" y="1011" width="6" height="5" fill="#222" stroke="#ddd"/>
<path d="M1098 995H1280V1024H1098z" fill="#0f93e6"/><path d="M1098 995H1280V997H1098z" fill="#2aa8ef"/>
<rect x="1071" y="1001" width="14" height="16" fill="#2a58c8"/>
<circle cx="1097" cy="1009" r="9" fill="#2a60d8" stroke="#9fc4f4"/><path d="M1100 1004l-5 5 5 5" stroke="#fff" stroke-width="2.400" fill="none"/>
<path d="M1116 1004l-5 9h10z" fill="none" stroke="#083"/><circle cx="1116" cy="1004" r="2" fill="#0c0"/><circle cx="1111" cy="1013" r="2" fill="#0c0"/><circle cx="1121" cy="1013" r="2" fill="#0c0"/>
<path d="M1127 1003q8-3 14 0q3 8-2 14q-6 3-10 0q-3-8-2-14z" fill="#6cc040"/><path d="M1130 1009l3 3 6-6" stroke="#fff" stroke-width="2" fill="none"/>
<circle cx="1151" cy="1009" r="7" fill="#66a030"/><circle cx="1151" cy="1009" r="4" fill="#f0d020"/>
<circle cx="1169" cy="1009" r="7" fill="#66a030"/><circle cx="1169" cy="1009" r="4" fill="#f0d020"/>
<rect x="1180" y="1006" width="11" height="9" fill="#305090" stroke="#ccd"/><rect x="1186" y="1002" width="11" height="9" fill="#2040a0" stroke="#ccd"/>
<rect x="1200" y="1002" width="14" height="15" fill="#fff"/><path d="M1201 1003v13M1213 1003l-9 7 9 6" stroke="#d01030" stroke-width="2.400" fill="none"/>
<path d="M1217 1015h2v3h-2zM1220 1012h2v6h-2zM1223 1009h2v9h-2zM1226 1006h2v12h-2z" fill="#ddd"/><path d="M1228 1011l4 7h-8z" fill="#f0d020"/>
</svg>
<span style="left:1071px;top:1001px;color:#fff;font-size:11.500px">RL</span>
<span style="left:1242px;top:1001px;color:#fff;font-size:11.500px;letter-spacing:.3px">1:18</span>
</body></html>
